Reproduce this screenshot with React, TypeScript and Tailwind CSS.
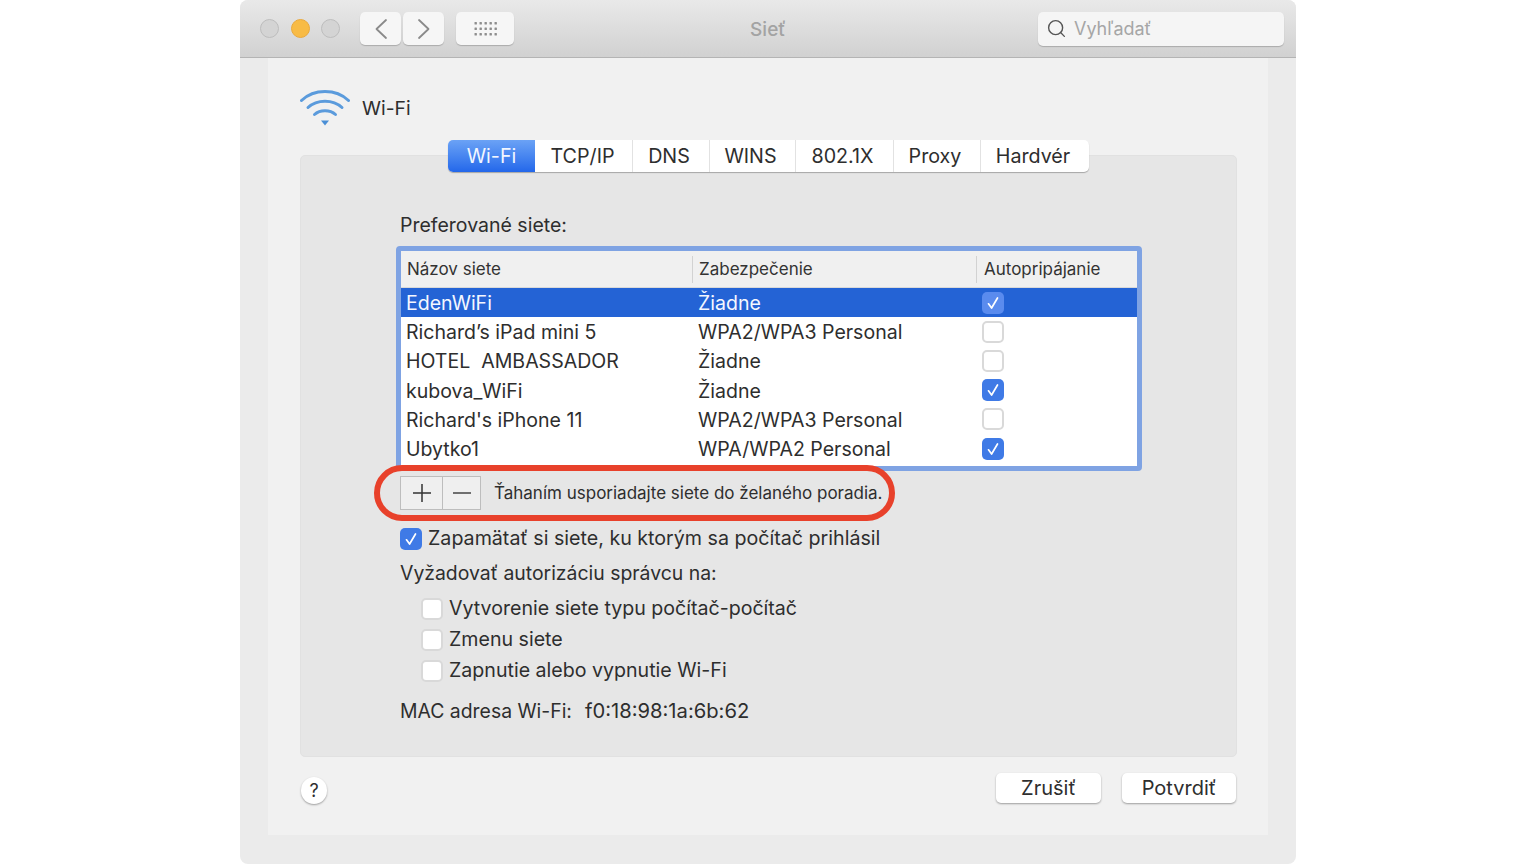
import { Search } from "lucide-react";

const NETWORKS = [
  { name: "EdenWiFi", security: "Žiadne", auto: true, selected: true },
  { name: "Richard’s iPad mini 5", security: "WPA2/WPA3 Personal", auto: false },
  { name: "HOTEL  AMBASSADOR", security: "Žiadne", auto: false },
  { name: "kubova_WiFi", security: "Žiadne", auto: true },
  { name: "Richard's iPhone 11", security: "WPA2/WPA3 Personal", auto: false },
  { name: "Ubytko1", security: "WPA/WPA2 Personal", auto: true },
];

const TABS = [
  { label: "Wi-Fi", width: "w-[87px]" },
  { label: "TCP/IP", width: "w-[97px]" },
  { label: "DNS", width: "w-[77px]" },
  { label: "WINS", width: "w-[86px]" },
  { label: "802.1X", width: "w-[98px]" },
  { label: "Proxy", width: "w-[87px]" },
  { label: "Hardvér", width: "w-[109px]" },
];

const ADMIN_OPTIONS = ["Vytvorenie siete typu počítač-počítač", "Zmenu siete", "Zapnutie alebo vypnutie Wi-Fi"];

function Checkbox({ checked = false, faded = false }: { checked?: boolean; faded?: boolean }) {
  if (!checked) {
    return <span className="block h-[22px] w-[22px] shrink-0 rounded-[5px] border-2 border-[#d9d9d9] bg-white" />;
  }
  return (
    <span className={`flex h-[22px] w-[22px] shrink-0 items-center justify-center rounded-[5px] ${faded ? "bg-[#5a8bee]" : "bg-[#3f7ae6]"}`}>
      <svg width="14" height="14" viewBox="0 0 14 14" fill="none" stroke="white" strokeWidth="1.7" strokeLinecap="round" strokeLinejoin="round">
        <path d="M2.5 7.8 5.6 12 11.5 2" />
      </svg>
    </span>
  );
}

function WifiIcon() {
  return (
    <svg width="50" height="38" viewBox="0 0 50 38" fill="none" stroke="#5b9bdc" strokeLinecap="round">
      <path d="M1.5 11.5C14 -0.5 36 -0.5 48.5 11.5" strokeWidth="3" />
      <path d="M8 18.5C17 10 33 10 42 18.5" strokeWidth="3" />
      <path d="M14.5 25.5C20 20.5 30 20.5 35.5 25.5" strokeWidth="3" />
      <path d="M21 31.5h8l-4 5z" fill="#4a8fd6" stroke="none" />
    </svg>
  );
}

export default function App() {
  return (
    <div className="flex h-[864px] justify-center overflow-hidden bg-white font-['Inter',sans-serif] text-[#2e2e2e]">
      <div className="flex w-[1056px] flex-col rounded-lg bg-[#ebebeb]">
        {/* Title bar */}
        <div className="grid h-[58px] shrink-0 grid-cols-[1fr_auto_1fr] items-center rounded-t-lg border-b border-[#b4b4b4] bg-gradient-to-b from-[#e9e9e9] to-[#d1d1d1]">
          <div className="flex items-center pl-5">
            <div className="flex gap-[11.5px]">
              <span className="h-[19px] w-[19px] rounded-full border border-[#bdbdbd] bg-[#d4d4d4]" />
              <span className="h-[19px] w-[19px] rounded-full border border-[#eaa93c] bg-[#f8bb45]" />
              <span className="h-[19px] w-[19px] rounded-full border border-[#bdbdbd] bg-[#d4d4d4]" />
            </div>
            <div className="ml-[20px] flex gap-[2px]">
              <div className="flex h-[33px] w-[41px] items-center justify-center rounded-[5px] bg-[#f6f6f6] shadow-[0_1px_1px_rgba(0,0,0,0.2)]">
                <svg width="14" height="22" viewBox="0 0 14 22" fill="none" stroke="#8a8a8a" strokeWidth="1.8" strokeLinecap="round" strokeLinejoin="round">
                  <path d="M12 2 2.5 11 12 20" />
                </svg>
              </div>
              <div className="flex h-[33px] w-[41px] items-center justify-center rounded-[5px] bg-[#f6f6f6] shadow-[0_1px_1px_rgba(0,0,0,0.2)]">
                <svg width="14" height="22" viewBox="0 0 14 22" fill="none" stroke="#8a8a8a" strokeWidth="1.8" strokeLinecap="round" strokeLinejoin="round">
                  <path d="M2 2l9.5 9L2 20" />
                </svg>
              </div>
            </div>
            <div className="ml-[12px] flex h-[33px] w-[58px] items-center justify-center rounded-[5px] bg-[#f6f6f6] shadow-[0_1px_1px_rgba(0,0,0,0.2)]">
              <svg width="23" height="15" viewBox="0 0 23 15" fill="#8e8e8e">
                {[0, 1, 2].map((r) =>
                  [0, 1, 2, 3, 4].map((c) => <rect key={`${r}-${c}`} x={c * 5 + 0.5} y={r * 5.5 + 1} width="2.4" height="2.4" rx="0.5" />),
                )}
              </svg>
            </div>
          </div>
          <div className="pt-[3px] text-[19px] font-medium text-[#a3a3a3]">Sieť</div>
          <div className="flex justify-end pr-3">
            <div className="flex h-[34px] w-[246px] items-center gap-[7px] rounded-[5px] bg-[#f5f5f5] pl-2 shadow-[0_1px_1px_rgba(0,0,0,0.2)]">
              <Search size={21} strokeWidth={1.6} className="text-[#555]" />
              <span className="text-[18px] text-[#a6a6a6]">Vyhľadať</span>
            </div>
          </div>
        </div>

        {/* Pane */}
        <div className="mx-[28px] flex h-[777px] flex-col bg-[#f1f1f1] pl-[32px] pr-[31px]">
          <div className="mt-[31px] flex h-[38px] items-center gap-[12px]">
            <WifiIcon />
            <span className="pt-[1px] text-[19.3px]">Wi-Fi</span>
          </div>

          <div className="relative z-10 mt-[13px] -mb-[17px] flex justify-center">
            <div className="flex h-[32px] overflow-hidden rounded-[5px] bg-white text-[19.7px] shadow-[0_1px_1px_rgba(0,0,0,0.28)]">
              {TABS.map((t, i) => (
                <div
                  key={t.label}
                  className={`flex items-center justify-center pt-px ${t.width} ${
                    i === 0 ? "bg-gradient-to-b from-[#6ba2f5] to-[#2367ea] text-[#f2f6ff]" : i > 1 ? "border-l border-[#e2e2e2] pr-[4px]" : "pr-[2px]"
                  }`}
                >
                  {t.label}
                </div>
              ))}
            </div>
          </div>

          <div className="h-[602px] rounded-[5px] border border-[#e1e1e1] bg-[#e6e6e6] pl-[99px]">
            <div className="pt-[56px] text-[19.5px] leading-[26px]">Preferované siete:</div>

            {/* Network table */}
            <div className="-ml-1 mt-[8px] h-[225px] w-[746px] rounded-[4px] border-[5px] border-[#7fa3e3] bg-white">
              <div className="flex h-[37px] items-center border-b border-[#d9d9d9] bg-[#f0f0f0] text-[17px] text-[#333]">
                <div className="w-[291px] pt-px pl-[6px]">Názov siete</div>
                <div className="h-[27px] w-[284px] border-l border-[#d2d2d2] pl-[6px] leading-[27px]">Zabezpečenie</div>
                <div className="h-[27px] flex-1 border-l border-[#d2d2d2] pl-[7px] leading-[27px]">Autopripájanie</div>
              </div>
              {NETWORKS.map((n) => (
                <div
                  key={n.name}
                  className={`flex h-[29.2px] items-center whitespace-pre text-[19.55px] ${n.selected ? "bg-[#2463d5] text-[#f4f7ff]" : ""}`}
                >
                  <div className="w-[297px] pt-[2px] pl-[5px]">{n.name}</div>
                  <div className="w-[284px] pt-[2px]">{n.security}</div>
                  <Checkbox checked={n.auto} faded={n.selected} />
                </div>
              ))}
            </div>

            {/* Add / remove row */}
            <div className="relative mt-[5px] flex h-[34px] items-center">
              <div className="flex h-[34px] w-[81px] border border-[#bdbdbd] bg-[#efefef]">
                <div className="flex w-[42px] items-center justify-center border-r border-[#bdbdbd]">
                  <svg width="18" height="18" viewBox="0 0 18 18" stroke="#333" strokeWidth="1.5">
                    <path d="M9 0v18M0 9h18" />
                  </svg>
                </div>
                <div className="flex flex-1 items-center justify-center">
                  <svg width="18" height="2" viewBox="0 0 18 2" stroke="#444" strokeWidth="1.5">
                    <path d="M0 1h18" />
                  </svg>
                </div>
              </div>
              <span className="ml-[13px] pt-[2px] text-[17px]">Ťahaním usporiadajte siete do želaného poradia.</span>
              <div className="absolute -left-[26px] -top-[11px] h-[56px] w-[521px] rounded-full border-[6px] border-[#e8412b]" />
            </div>

            <div className="mt-[18px] flex h-[22px] items-center gap-[6px] text-[19.65px]">
              <Checkbox checked />
              <span>Zapamätať si siete, ku ktorým sa počítač prihlásil</span>
            </div>
            <div className="mt-[10px] h-[26px] text-[19.4px] leading-[26px]">Vyžadovať autorizáciu správcu na:</div>
            <div className="mt-[12px] flex flex-col gap-[9px] pl-[21px]">
              {ADMIN_OPTIONS.map((o) => (
                <div key={o} className="flex h-[22px] items-center gap-[6px] text-[19.6px]">
                  <Checkbox />
                  <span>{o}</span>
                </div>
              ))}
            </div>
            <div className="mt-[16px] flex h-[26px] leading-[26px]">
              <span className="w-[185px] text-[19.4px]">MAC adresa Wi-Fi:</span>
              <span className="text-[20.2px]">f0:18:98:1a:6b:62</span>
            </div>
          </div>

          {/* Footer */}
          <div className="mt-[16px] flex items-start justify-between pr-px">
            <div className="mt-[4px] ml-px flex h-[27px] w-[26px] items-center justify-center rounded-full bg-white text-[18px] shadow-[0_1px_2px_rgba(0,0,0,0.35)]">?</div>
            <div className="flex gap-[21px] text-[20px]">
              <div className="flex h-[30px] w-[105px] items-center justify-center rounded-[5px] bg-white shadow-[0_1px_2px_rgba(0,0,0,0.35)]">Zrušiť</div>
              <div className="flex h-[30px] w-[114px] items-center justify-center rounded-[5px] bg-white shadow-[0_1px_2px_rgba(0,0,0,0.35)]">Potvrdiť</div>
            </div>
          </div>
        </div>
      </div>
    </div>
  );
}
